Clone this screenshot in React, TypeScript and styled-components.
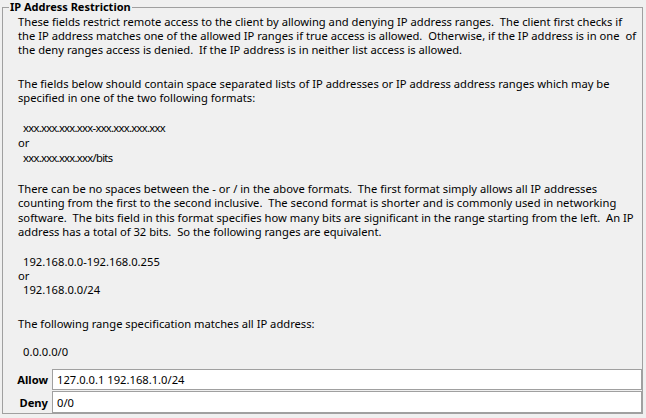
import React from "react";
import styled, { createGlobalStyle } from "styled-components";

const Global = createGlobalStyle`
  html, body { margin: 0; padding: 0; background: #f0f0f0; }
  body { font-family: "Segoe UI", "Noto Sans", sans-serif; font-size: 11.2px; color: #000; }
`;

const Page = styled.div`
  width: 646px;
  height: 414px;
  padding: 0 3px 0 2px;
  box-sizing: border-box;
  background: #f0f0f0;
  display: flex;
  flex-direction: column;
`;

const Group = styled.fieldset`
  margin: 0;
  padding: 0;
  border: 1px solid #a0a0a0;
  flex: 1;
  display: flex;
  flex-direction: column;
  min-width: 0;
`;

const Legend = styled.legend`
  margin-left: 6px;
  padding: 0 1px;
  font-weight: bold;
  font-size: 11px;
  line-height: 14px;
`;

const Body = styled.div`
  padding-left: 15px;
  flex: 1;
`;

const Para = styled.div<{ $top: number; $lh: number }>`
  margin-top: ${(p) => p.$top}px;
  line-height: ${(p) => p.$lh}px;
  white-space: pre;
`;

const Indent = styled.div<{ $tight?: boolean }>`
  padding-left: 5px;
  letter-spacing: ${(p) => (p.$tight ? "-0.7px" : "0")};
`;

const Fields = styled.div`
  display: grid;
  grid-template-columns: 49px 1fr;
  grid-template-rows: 21px 22px;
  row-gap: 1px;
`;

const Label = styled.label`
  font-weight: bold;
  text-align: right;
  padding-right: 4px;
  align-self: center;
`;

const Input = styled.input`
  font: inherit;
  height: 100%;
  box-sizing: border-box;
  border: 1px solid #a0a0a0;
  margin: 0;
  padding: 0 4px;
  background: #fff;
  color: #000;
  outline: none;
`;

export default function App() {
  return (
    <>
      <Global />
      <Page>
        <Group>
          <Legend>IP Address Restriction</Legend>
          <Body>
            <Para $top={1} $lh={14}>
              {"These fields restrict remote access to the client by allowing and denying IP address ranges.  The client first checks if\nthe IP address matches one of the allowed IP ranges if true access is allowed.  Otherwise, if the IP address is in one  of\nthe deny ranges access is denied.  If the IP address is in neither list access is allowed."}
            </Para>
            <Para $top={20} $lh={14}>
              {"The fields below should contain space separated lists of IP addresses or IP address address ranges which may be\nspecified in one of the two following formats:"}
            </Para>
            <Para $top={15} $lh={15}>
              <Indent $tight>xxx.xxx.xxx.xxx-xxx.xxx.xxx.xxx</Indent>
              <div>or</div>
              <Indent $tight>xxx.xxx.xxx.xxx/bits</Indent>
            </Para>
            <Para $top={17} $lh={14.3}>
              {"There can be no spaces between the - or / in the above formats.  The first format simply allows all IP addresses\ncounting from the first to the second inclusive.  The second format is shorter and is commonly used in networking\nsoftware.  The bits field in this format specifies how many bits are significant in the range starting from the left.  An IP\naddress has a total of 32 bits.  So the following ranges are equivalent."}
            </Para>
            <Para $top={16} $lh={14}>
              <Indent>192.168.0.0-192.168.0.255</Indent>
              <div>or</div>
              <Indent>192.168.0.0/24</Indent>
            </Para>
            <Para $top={20} $lh={14}>
              The following range specification matches all IP address:
            </Para>
            <Para $top={14} $lh={14}>
              <Indent>0.0.0.0/0</Indent>
            </Para>
          </Body>
          <Fields>
            <Label htmlFor="allow">Allow</Label>
            <Input id="allow" defaultValue="127.0.0.1 192.168.1.0/24" />
            <Label htmlFor="deny">Deny</Label>
            <Input id="deny" defaultValue="0/0" />
          </Fields>
        </Group>
      </Page>
    </>
  );
}
